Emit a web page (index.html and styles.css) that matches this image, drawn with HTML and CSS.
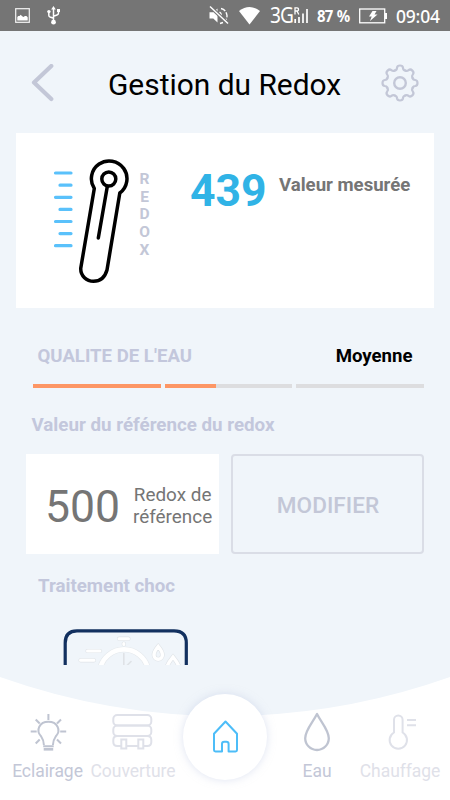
FILE: index.html
```html
<!DOCTYPE html>
<html lang="fr">
<head>
<meta charset="utf-8">
<title>Gestion du Redox</title>
<link rel="stylesheet" href="styles.css">
</head>
<body>
<div class="app">
  <div class="status">
    <svg class="st-image" width="15" height="15" viewBox="0 0 15 15"><rect x=".7" y=".7" width="13.6" height="13.6" fill="none" stroke="#f4f4f4" stroke-width="1.2"/><path d="M2.3 12.6V9l1-1h1.2l1.2-1.2 1.5 1.5 1.3.7 1.4-1h1.5l1.3 1.3v3.3z" fill="#fff"/></svg>
    <svg class="st-usb" width="14" height="19" viewBox="0 0 14 19"><g fill="none" stroke="#fff" stroke-width="1.5"><path d="M6.5 2v14M1.8 6v3.2q0 1.300 1.300 1.800l3.400 1.200M11.500 4.500v2.500q0 1.500-1.500 2l-3.500 1.200"/></g><path d="M6.500 0l2.300 3.500H4.200z" fill="#fff"/><circle cx="6.500" cy="16.200" r="2.400" fill="#fff"/><circle cx="1.900" cy="5.600" r="1.700" fill="#fff"/><path d="M10 3h3v3h-3z" fill="#fff"/></svg>
    <svg class="st-mute" width="20" height="20" viewBox="0 0 20 20"><path d="M.5 6.300h3.800L8.500 2.500v14l-4.200-4H.5z" fill="#fff"/><g fill="none" stroke="#fff" stroke-width="1.400"><path d="M10.500 6a4 4 0 0 1 1.500 4.500M12 2.500q5 1 6 7 0 3.500-2 6M11 17.500l3-1" stroke-dasharray="5 1.500"/></g><path d="M1 .5l18 17" stroke="#757575" stroke-width="3.600"/><path d="M1 .5l18 17" stroke="#fff" stroke-width="1.400"/></svg>
    <svg class="st-wifi" width="21" height="18" viewBox="0 0 21 18"><path d="M0 4q10.500-8 21 0L10.500 17.500z" fill="#fff"/></svg>
    <span class="st-net">3G</span>
    <svg class="st-signal" width="15" height="17" viewBox="0 0 15 17"><path d="M1 7.500V.8h2q1.500 0 1.500 1.600T3 4H1M3 4l1.800 3.500" fill="none" stroke="#fff" stroke-width="1.300"/><path d="M1.200 12v4M5 10V16M9 6.500V16M13 2v14" fill="none" stroke="#fff" stroke-width="1.700"/></svg>
    <span class="st-pct">87 %</span>
    <svg class="st-battery" width="28" height="16" viewBox="0 0 28 16"><rect x=".7" y="1" width="25" height="13.800" fill="none" stroke="#fff" stroke-width="1.300"/><path d="M26 5h2v6h-2z" fill="#fff"/><path d="M13.500 3h4l-2 3.500h3L11 13l1.700-4.500H10z" fill="#fff"/></svg>
    <span class="st-time">09:04</span>
  </div>

  <header class="header">
    <svg width="24" height="38" viewBox="0 0 24 38"><path d="M21.300 2L4 18.500 21.300 35" fill="none" stroke="#c3c7d7" stroke-width="4.200" stroke-linecap="round" stroke-linejoin="round"/></svg>
    <h1 class="title">Gestion du Redox</h1>
    <svg width="40" height="40" viewBox="-20 -20 40 40"><defs><path id="tooth" d="M-5.200-12.500C-3.600-12.800-3.100-14-3-15.200-2.800-17-1.700-17.500 0-17.500S2.800-17 3-15.200C3.100-14 3.600-12.800 5.200-12.500"/></defs><g fill="none" stroke="#c3c7d7" stroke-width="2.200" stroke-linecap="round"><use href="#tooth"/><use href="#tooth" transform="rotate(45)"/><use href="#tooth" transform="rotate(90)"/><use href="#tooth" transform="rotate(135)"/><use href="#tooth" transform="rotate(180)"/><use href="#tooth" transform="rotate(225)"/><use href="#tooth" transform="rotate(270)"/><use href="#tooth" transform="rotate(315)"/><circle r="5.800" stroke-width="2.400"/></g></svg>
  </header>

  <section class="card">
    <svg class="probe" width="80" height="126" viewBox="0 0 80 126"><g stroke="#5ac1fb" stroke-width="3.200" stroke-linecap="round"><path d="M3.500 15H19M8 27.200H19M3.500 39.300H19M8 51.400H19M3.500 63.500H19M8 75.600H19M3.500 87.700H19"/></g><g fill="none" stroke="#000" stroke-width="3.500" stroke-linecap="round" stroke-linejoin="round"><path d="M42.300 30.500A17.800 17.800 0 1 1 67.800 35L55 112C53 119 48.500 123.300 41.500 123.300S28.700 118 28.700 110.500Z"/><circle cx="56.800" cy="21" r="7"/><path d="M55.300 28.500L46.300 80"/></g></svg>
    <div class="letters"><span>R</span><span>E</span><span>D</span><span>O</span><span>X</span></div>
    <strong class="measure">439</strong>
    <span class="measure-label">Valeur mesurée</span>
  </section>

  <main class="content">
    <div class="quality"><span class="quality-name">QUALITE DE L'EAU</span><span class="quality-value">Moyenne</span></div>
    <div class="bars"><i class="bar full"></i><i class="bar half"></i><i class="bar"></i></div>
    <h2 class="ref-title">Valeur du référence du redox</h2>
    <div class="ref-row">
      <div class="ref-box"><span class="ref-value">500</span><span class="ref-label">Redox de<br>référence</span></div>
      <button class="modify">MODIFIER</button>
    </div>
    <h2 class="shock-title">Traitement choc</h2>
    <svg class="shock" width="126" height="36" viewBox="0 0 126 36"><path d="M2.200 40V14Q2.200 1.900 14 1.900H111Q123.300 1.900 123.300 14V40" fill="none" stroke="#12305f" stroke-width="3.200"/><g fill="none" stroke-linecap="round"><g stroke="#e0e4e8" stroke-width="4.200"><path d="M24.500 22H37M17.500 31.300H31M56 9.700H65.500M60.800 14.500V15.500"/></g><path d="M37 40A24.500 24.500 0 0 1 85 40" stroke="#e5e9ed" stroke-width="5.800"/><g stroke="#fff" stroke-width="3"><path d="M24.500 22H37M17.500 31.300H31M56 9.700H65.500M60.800 14.500V15.500"/></g><path d="M37 40A24.500 24.500 0 0 1 85 40" stroke="#fff" stroke-width="4.600"/><path d="M60.800 24.500V40M64 36.500l4-4" stroke="#dfe2e6" stroke-width="1.600"/><path d="M95.200 17.500Q91 22.500 91 26a4.200 4.200 0 0 0 8.400 0Q99.400 22.500 95.200 17.500zM104 38q1-4 6-10 5 6 6 10" stroke="#e0e4e8" stroke-width="4.600"/><path d="M95.200 17.500Q91 22.500 91 26a4.200 4.200 0 0 0 8.400 0Q99.400 22.500 95.200 17.500zM104 38q1-4 6-10 5 6 6 10" stroke="#fff" stroke-width="3.400"/></g></svg>
  </main>

  <nav class="nav">
    <svg class="curve" width="450" height="40" viewBox="0 0 450 40"><path d="M0 0Q110 39 225 39T450 0" fill="#f0f5fa"/></svg>
    <a class="item light">
      <svg width="38" height="40" viewBox="0 0 38 40"><g fill="none" stroke="#bfc4d1" stroke-width="2" transform="translate(.7 0)"><path d="M14.200 33Q14 28 11.500 24.500C5.500 18 10 9.800 18.700 9.800S32 18 26 24.500Q23.500 28 23.200 33M18.700 2v6M1 19.500h6M30.500 19.500h6M6 7.500l4 4M31.300 7.500l-4 4M6 31.500l4-4M31.300 31.500l-4-4M13.500 34.300h10.500"/><path d="M14 37.300h9.500" stroke-width="2.600"/></g></svg>
      <span>Eclairage</span>
    </a>
    <a class="item cover faint">
      <svg width="42" height="40" viewBox="0 0 42 40"><g fill="none" stroke="#dfe1e9" stroke-width="2" transform="translate(-.7 0)"><rect x="2" y="3" width="38" height="10.500" rx="4"/><rect x="2" y="13.500" width="38" height="10.500" rx="4"/><path d="M10 34H6Q2 34 2 30V28Q2 24 6 24H36Q40 24 40 28V30Q40 34 36 34H32M15 34H27"/><path d="M10 27.500h5v9h-5zM27 27.500h5v9h-5z"/></g></svg>
      <span>Couverture</span>
    </a>
    <a class="home"><svg width="28" height="36" viewBox="0 0 28 36"><path d="M14.500 2.500L3 14.800V31q0 1.400 1.400 1.400H11V25q0-2.300 2.300-2.300h2q2.300 0 2.300 2.300v7.400h7q1.400 0 1.400-1.400V14.800z" fill="none" stroke="#4dbdf8" stroke-width="2" stroke-linejoin="round"/></svg></a>
    <a class="item water">
      <svg width="30" height="40" viewBox="0 0 30 40"><path d="M15 2C11 10 3.200 18 3.200 26.200a11.800 11.800 0 0 0 23.600 0C26.800 18 19 10 15 2z" fill="none" stroke="#bfc4d1" stroke-width="2.300" stroke-linejoin="round"/></svg>
      <span>Eau</span>
    </a>
    <a class="item heat faint">
      <svg width="32" height="40" viewBox="0 0 32 40"><path d="M10 20.500V7.700a4.300 4.300 0 0 1 8.600 0V20.500a8.700 8.700 0 1 1-8.600 0zM23 8H32M23 13.300H32" fill="none" stroke="#dfe1e9" stroke-width="2"/></svg>
      <span>Chauffage</span>
    </a>
  </nav>
</div>
</body>
</html>
```

FILE: styles.css
```css
* { box-sizing: border-box; }
body { margin: 0; font-family: Roboto, sans-serif; background: #f0f5fa; }
svg { display: block; flex: none; }
h1, h2 { margin: 0; }
span, strong { white-space: nowrap; }
.app { width: 450px; height: 800px; overflow: hidden; display: flex; flex-direction: column; }

.status { height: 31px; flex: none; background: #757575; color: #fff; display: flex; align-items: center; padding-left: 15px; font-family: "Noto Sans", sans-serif; }
.st-usb { margin-left: 17px; }
.st-mute { margin-left: 148px; }
.st-wifi { margin-left: 10px; }
.st-net { margin: -3px 0 0 10px; width: 24px; font-size: 22px; letter-spacing: -1px; transform: scaleX(.87); transform-origin: left; }
.st-signal { margin-left: 0; }
.st-pct { margin-left: 8px; width: 34px; font-size: 16px; font-weight: 700; letter-spacing: -0.7px; word-spacing: 1px; transform: scaleX(.93); transform-origin: left; }
.st-battery { margin-left: 8px; }
.st-time { margin-left: 9px; font-size: 17.500px; font-weight: 500; letter-spacing: -0.2px; }

.header { height: 102px; flex: none; display: flex; align-items: center; padding: 2px 31px 0 30px; }
.title { width: 234px; margin: 4px 39px 0 54px; font-size: 29.900px; font-weight: 400; line-height: 36px; color: #000; white-space: nowrap; }

.card { flex: none; height: 175px; margin: 0 16px; background: #fff; display: flex; align-items: flex-start; }
.probe { margin: 25px 0 0 36px; }
.letters { margin: 38px 0 0 6px; width: 13px; display: flex; flex-direction: column; align-items: center; font-size: 15.500px; line-height: 17.700px; font-weight: 700; color: #c3c7d7; }
.measure { margin: 31px 0 0 39px; width: 77px; font-size: 44.500px; line-height: 54px; color: #30b3e6; }
.measure-label { margin: 41px 0 0 12px; font-size: 18.600px; line-height: 22px; font-weight: 700; color: #757575; }

.content { flex: none; height: 369px; }
.quality { display: flex; justify-content: space-between; padding: 37px 37.500px 0 37.500px; font-size: 18.600px; line-height: 22px; font-weight: 700; }
.quality-name { color: #c3c7dc; }
.quality-value { color: #000; }
.bars { display: flex; gap: 4px; margin: 17px 26px 0 33px; }
.bar { flex: 1; height: 4px; background: #dddddf; }
.full { background: #fd9665; }
.half { background: linear-gradient(to right, #fd9665 40%, #dddddf 40%); }
.ref-title { margin: 26px 0 0 31.500px; font-size: 18.750px; line-height: 22px; color: #c3c7dc; }
.ref-row { display: flex; gap: 12px; margin: 18px 26px 0; height: 100px; }
.ref-box { width: 193px; background: #fff; display: flex; align-items: center; padding-left: 19px; color: #757575; }
.ref-value { width: 75px; font-size: 44.500px; padding-top: 6px; }
.ref-label { margin-left: 13px; padding-top: 3px; font-size: 18.900px; line-height: 22px; text-align: center; }
.modify { flex: 1; padding: 3px 0 0 1px; background: transparent; border: 2px solid #dadde6; border-radius: 4px; color: #c3c7d7; font: 500 22.600px Roboto, sans-serif; }
.shock-title { margin: 21px 0 0 38px; font-size: 18.700px; line-height: 22px; color: #c3c7dc; }
.shock { margin: 32px 0 0 63px; }

.nav { position: relative; flex: none; height: 123px; background: #fff; display: flex; align-items: flex-start; }
.curve { position: absolute; left: 0; top: 0; }
.item { position: relative; margin-top: 35px; display: flex; flex-direction: column; align-items: center; color: #c3c7d7; font-size: 17.500px; line-height: 22px; letter-spacing: -0.05px; }
.item span { margin-top: 8px; }
.faint { color: #dfe1e9; }
.light { width: 95px; }
.cover { width: 76px; }
.home { position: relative; width: 84px; height: 86px; margin: 17px 0 0 12px; border-radius: 50%; background: #fff; box-shadow: 0 0 9px rgba(190,200,228,.5); display: flex; align-items: center; justify-content: center; }
.water { width: 100px; }
.heat { width: 66px; }
```
